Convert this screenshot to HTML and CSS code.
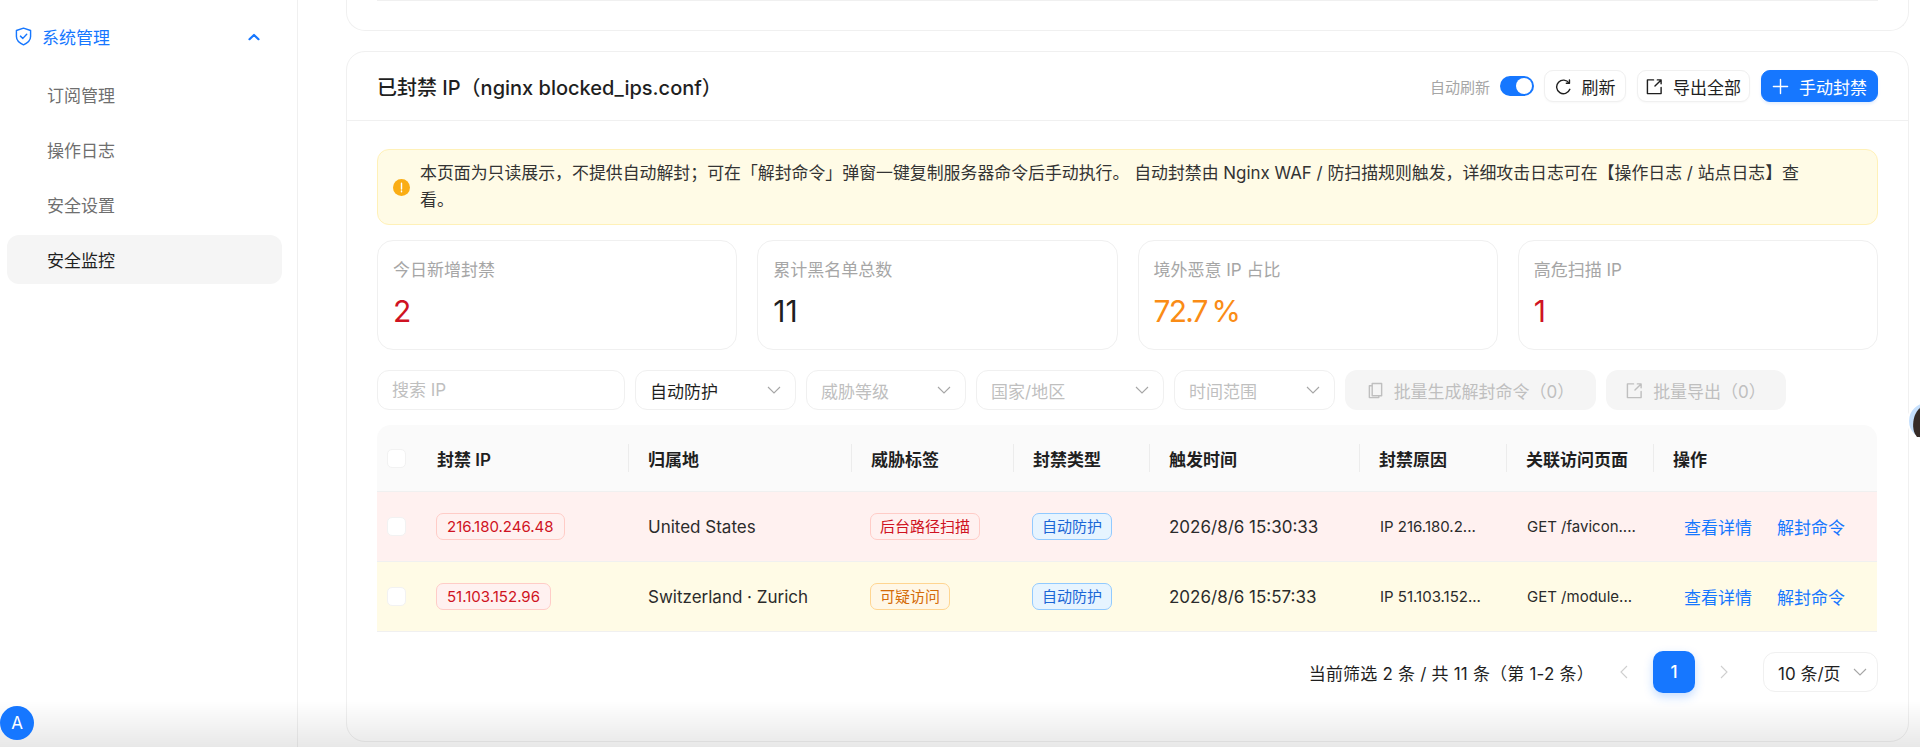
FILE: index.html
```html
<!DOCTYPE html>
<html lang="zh-CN">
<head>
    <meta charset="UTF-8">
    <meta name="viewport" content="width=device-width, initial-scale=1.0">
    <title>安全监控</title>
    <link rel="stylesheet" href="styles.css">
</head>
<body>
    <aside class="sidebar">
        <div class="menuGroup">
            <svg class="menuIcon" viewBox="0 0 18 20" fill="none" stroke="currentColor" stroke-width="1.5" stroke-linejoin="round" stroke-linecap="round">
                <path d="M9 1.2 16.5 3.6V10c0 4-3.2 6.900-7.500 8.800C4.700 16.900 1.500 14 1.500 10V3.600Z"/>
                <path d="M5.800 9.600 8.300 12 12.400 7.600"/>
            </svg>
            <span>系统管理</span>
            <svg class="menuArrow" viewBox="0 0 12 8" fill="none" stroke="currentColor" stroke-width="2.200" stroke-linecap="round" stroke-linejoin="round">
                <path d="M1.500 6.200 6 2 10.500 6.200"/>
            </svg>
        </div>
        <a class="menuItem" href="#">订阅管理</a>
        <a class="menuItem" href="#">操作日志</a>
        <a class="menuItem" href="#">安全设置</a>
        <a class="menuItem active" href="#">安全监控</a>
    </aside>

    <main class="main">
        <div class="prevCard"><div class="prevLine"></div></div>

        <section class="card">
            <header class="cardHead">
                <h2>已封禁 IP（nginx blocked_ips.conf）</h2>
                <div class="headTools">
                    <span class="autoLabel">自动刷新</span>
                    <span class="switch"><i></i></span>
                    <button class="btn">
                        <svg class="btnIcon" viewBox="0 0 18 18" fill="none" stroke="currentColor" stroke-width="1.500" stroke-linecap="round">
                            <path d="M14.900 5.400A7.200 7.200 0 1 0 15.700 12"/>
                            <path d="M15.300 2.200V5.600H12" stroke-linejoin="round"/>
                        </svg>
                        刷新
                    </button>
                    <button class="btn">
                        <svg class="btnIcon" viewBox="0 0 18 18" fill="none" stroke="currentColor" stroke-width="1.500" stroke-linecap="round" stroke-linejoin="round">
                            <path d="M8 2H1.500V16.500H16V10"/>
                            <path d="M9.500 8.500 16 2M12 2H16V6"/>
                        </svg>
                        导出全部
                    </button>
                    <button class="btn primary">
                        <svg class="btnIcon" viewBox="0 0 18 18" fill="none" stroke="currentColor" stroke-width="1.500" stroke-linecap="round">
                            <path d="M9 1.500V16.500M1.500 9H16.500"/>
                        </svg>
                        手动封禁
                    </button>
                </div>
            </header>

            <div class="cardBody">
                <div class="alert">
                    <svg class="alertIcon" viewBox="0 0 18 18">
                        <circle cx="9" cy="9" r="9" fill="#faad14"/>
                        <path d="M9 4.500V10.500M9 12.700V13.500" stroke="#fff" stroke-width="1.500" stroke-linecap="round"/>
                    </svg>
                    <p>本页面为只读展示，不提供自动解封；可在「解封命令」弹窗一键复制服务器命令后手动执行。 自动封禁由 Nginx WAF / 防扫描规则触发，详细攻击日志可在【操作日志 / 站点日志】查看。</p>
                </div>

                <div class="stats">
                    <div class="stat">
                        <div class="statLabel">今日新增封禁</div>
                        <div class="statValue red">2</div>
                    </div>
                    <div class="stat">
                        <div class="statLabel">累计黑名单总数</div>
                        <div class="statValue">11</div>
                    </div>
                    <div class="stat">
                        <div class="statLabel">境外恶意 IP 占比</div>
                        <div class="statValue orange">72.7 %</div>
                    </div>
                    <div class="stat">
                        <div class="statLabel">高危扫描 IP</div>
                        <div class="statValue red">1</div>
                    </div>
                </div>

                <div class="filters">
                    <input class="search" type="text" placeholder="搜索 IP">
                    <div class="select w161 filled">自动防护<svg class="caret" viewBox="0 0 14 8"><path d="M1 1 7 7 13 1"/></svg></div>
                    <div class="select w160">威胁等级<svg class="caret" viewBox="0 0 14 8"><path d="M1 1 7 7 13 1"/></svg></div>
                    <div class="select w188">国家/地区<svg class="caret" viewBox="0 0 14 8"><path d="M1 1 7 7 13 1"/></svg></div>
                    <div class="select w161">时间范围<svg class="caret" viewBox="0 0 14 8"><path d="M1 1 7 7 13 1"/></svg></div>
                    <button class="batchBtn w251">
                        <svg class="btnIcon" viewBox="0 0 18 18" fill="none" stroke="currentColor" stroke-width="1.500" stroke-linejoin="round">
                            <path d="M5.500 1.500H15.500V14.500H5.500Z"/>
                            <path d="M5.500 4H2.500V16.500H12.500V14.500"/>
                        </svg>
                        批量生成解封命令（0）
                    </button>
                    <button class="batchBtn w180">
                        <svg class="btnIcon" viewBox="0 0 18 18" fill="none" stroke="currentColor" stroke-width="1.500" stroke-linecap="round" stroke-linejoin="round">
                            <path d="M8 2H1.500V16.500H16V10"/>
                            <path d="M9.500 8.500 16 2M12 2H16V6"/>
                        </svg>
                        批量导出（0）
                    </button>
                </div>

                <table class="ipTable">
                    <colgroup>
                        <col class="c1"><col class="c2"><col class="c3"><col class="c4"><col class="c5"><col class="c6"><col class="c7"><col class="c8"><col class="c9">
                    </colgroup>
                    <thead>
                        <tr>
                            <th class="checkCell"><span class="check"></span></th>
                            <th>封禁 IP</th>
                            <th>归属地</th>
                            <th>威胁标签</th>
                            <th>封禁类型</th>
                            <th>触发时间</th>
                            <th>封禁原因</th>
                            <th>关联访问页面</th>
                            <th>操作</th>
                        </tr>
                    </thead>
                    <tbody>
                        <tr class="rowDanger">
                            <td class="checkCell"><span class="check"></span></td>
                            <td><span class="tag tagRed tagIp">216.180.246.48</span></td>
                            <td>United States</td>
                            <td><span class="tag tagRed">后台路径扫描</span></td>
                            <td><span class="tag tagBlue">自动防护</span></td>
                            <td>2026/8/6 15:30:33</td>
                            <td class="small">IP 216.180.2...</td>
                            <td class="small">GET /favicon....</td>
                            <td class="actions"><a href="#">查看详情</a><a href="#">解封命令</a></td>
                        </tr>
                        <tr class="rowWarn">
                            <td class="checkCell"><span class="check"></span></td>
                            <td><span class="tag tagRed tagIp">51.103.152.96</span></td>
                            <td>Switzerland · Zurich</td>
                            <td><span class="tag tagOrange">可疑访问</span></td>
                            <td><span class="tag tagBlue">自动防护</span></td>
                            <td>2026/8/6 15:57:33</td>
                            <td class="small">IP 51.103.152...</td>
                            <td class="small">GET /module...</td>
                            <td class="actions"><a href="#">查看详情</a><a href="#">解封命令</a></td>
                        </tr>
                    </tbody>
                </table>

                <div class="pager">
                    <span class="pagerText">当前筛选 2 条 / 共 11 条（第 1-2 条）</span>
                    <svg class="pagerArrow" viewBox="0 0 8 14"><path d="M7 1 1 7 7 13"/></svg>
                    <span class="pageNum">1</span>
                    <svg class="pagerArrow" viewBox="0 0 8 14"><path d="M1 1 7 7 1 13"/></svg>
                    <div class="pageSize">10 条/页<svg class="caret" viewBox="0 0 14 8"><path d="M1 1 7 7 13 1"/></svg></div>
                </div>
            </div>
        </section>
    </main>

    <div class="pageFade"></div>
    <div class="avatar">A</div>
    <svg class="floatBubble" viewBox="0 0 40 40">
        <circle cx="20" cy="20" r="19" fill="#c6e0fd" stroke="#fff" stroke-width="2"/>
        <path d="M8 33C5 27 6 19 8 14 10 9 13 6 17 5L20 5V36H10Z" fill="#362c28"/>
    </svg>
</body>
</html>
```

FILE: styles.css
```css
html, body {
    margin: 0;
    padding: 0;
    height: 100%;
    overflow: hidden;
}

body {
    display: flex;
    background: #fff;
    color: #1f1f1f;
    font-family: Inter, "Noto Sans CJK SC", sans-serif;
    font-size: 17px;
}

a {
    text-decoration: none;
}

/* sidebar */
.sidebar {
    width: 298px;
    flex: none;
    box-sizing: border-box;
    padding: 12px 15px 0 7px;
    border-right: 1px solid #f0f0f0;
    display: flex;
    flex-direction: column;
    gap: 6px;
}

.menuGroup {
    height: 49px;
    display: flex;
    align-items: center;
    padding-left: 8px;
    color: #1677ff;
    margin-bottom: 3px;
}

.menuIcon {
    width: 17px;
    height: 19px;
    margin-right: 10px;
}

.menuArrow {
    width: 12px;
    height: 8px;
    margin-left: auto;
    margin-right: 22px;
}

.menuItem {
    height: 49px;
    display: flex;
    align-items: center;
    padding-left: 40px;
    color: #6f6f6f;
    border-radius: 12px;
}

.menuItem.active {
    background: #f5f5f5;
    color: #1f1f1f;
}

/* main column */
.main {
    flex: 1;
    min-width: 0;
    padding: 0 11px 0 48px;
    display: flex;
    flex-direction: column;
    gap: 20px;
}

.prevCard {
    height: 31px;
    flex: none;
    box-sizing: border-box;
    padding: 0 30px;
    border: 1px solid #f0f0f0;
    border-top: none;
    border-radius: 0 0 19px 19px;
}

.prevLine {
    height: 1px;
    background: #f0f0f0;
}

.card {
    height: 691px;
    flex: none;
    box-sizing: border-box;
    border: 1px solid #f0f0f0;
    border-radius: 19px;
}

.cardHead {
    height: 69px;
    box-sizing: border-box;
    padding: 0 30px;
    display: flex;
    align-items: center;
    justify-content: space-between;
    border-bottom: 1px solid #f0f0f0;
}

.cardHead h2 {
    margin: 0;
    font-size: 20px;
    font-weight: 500;
}

.headTools {
    display: flex;
    align-items: center;
}

.autoLabel {
    font-size: 15px;
    color: #a6a6a6;
    margin-right: 10px;
}

.switch {
    width: 34px;
    height: 20px;
    border-radius: 10px;
    background: #1677ff;
    display: flex;
    align-items: center;
    justify-content: flex-end;
    padding-right: 2px;
    box-sizing: border-box;
    margin-right: 10px;
}

.switch i {
    width: 16px;
    height: 16px;
    border-radius: 50%;
    background: #fff;
}

.btn {
    height: 32px;
    padding: 0 8px;
    margin-left: 11px;
    display: flex;
    align-items: center;
    gap: 10px;
    font: inherit;
    color: #1f1f1f;
    background: #fff;
    border: 1px solid #f0f0f0;
    border-radius: 9px;
    box-shadow: 0 1px 2px rgba(0, 0, 0, 0.03);
}

.btn:first-of-type {
    margin-left: 0;
    padding: 0 9.5px;
}

.btn.primary {
    padding: 0 10px;
    background: #1677ff;
    border-color: #1677ff;
    color: #fff;
    box-shadow: 0 2px 3px rgba(22, 119, 255, 0.12);
}

.btnIcon {
    width: 17px;
    height: 17px;
    flex: none;
}

.cardBody {
    padding: 28px 30px 0;
    display: flex;
    flex-direction: column;
}

/* notice */
.alert {
    height: 76px;
    box-sizing: border-box;
    padding: 0 15px;
    display: flex;
    align-items: center;
    gap: 10px;
    background: #fffbe6;
    border: 1px solid #fff1b8;
    border-radius: 12px;
}

.alertIcon {
    width: 17px;
    height: 17px;
    flex: none;
}

.alert p {
    margin: 0;
    max-width: 1395px;
    font-size: 16.9px;
    line-height: 27px;
    color: #333;
}

/* numbers */
.stats {
    margin-top: 15px;
    display: grid;
    grid-template-columns: repeat(4, 1fr);
    gap: 20px;
}

.stat {
    height: 110px;
    box-sizing: border-box;
    padding: 17px 15px;
    border: 1px solid #f0f0f0;
    border-radius: 16px;
}

.statLabel {
    color: #a6a6a6;
    line-height: 25px;
}

.statValue {
    margin-top: 10px;
    font-size: 30px;
    line-height: 36px;
    color: #1f1f1f;
}

.red {
    color: #cf1322;
}

.orange {
    color: #fa8c16;
    letter-spacing: -1.8px;
    word-spacing: -2px;
}

/* filters */
.filters {
    margin-top: 20px;
    display: flex;
    gap: 10px;
}

.search, .select, .batchBtn {
    height: 40px;
    box-sizing: border-box;
    border-radius: 12px;
    font: inherit;
}

.search {
    width: 248px;
    padding: 0 14px;
    border: 1px solid #f0f0f0;
    outline: none;
}

.search::placeholder {
    color: #bfbfbf;
}

.select {
    padding: 0 14px;
    display: flex;
    align-items: center;
    justify-content: space-between;
    border: 1px solid #f0f0f0;
    color: #bfbfbf;
}

.select.filled {
    color: #1f1f1f;
}

.w161 {
    width: 161px;
}

.w160 {
    width: 160px;
}

.w188 {
    width: 188px;
}

.w251 {
    width: 251px;
}

.w180 {
    width: 180px;
}

.caret {
    width: 14px;
    height: 8px;
    fill: none;
    stroke: #a6a6a6;
    stroke-width: 1.100;
}

.batchBtn {
    display: flex;
    align-items: center;
    justify-content: center;
    gap: 10px;
    padding: 0;
    border: none;
    background: #f5f5f5;
    color: #bfbfbf;
}

/* table */
.ipTable {
    margin-top: 15px;
    width: 1500px;
    table-layout: fixed;
    border-collapse: separate;
    border-spacing: 0;
}

.c1 { width: 40px; }
.c2 { width: 211px; }
.c3 { width: 223px; }
.c4 { width: 162px; }
.c5 { width: 136px; }
.c6 { width: 210px; }
.c7 { width: 147px; }
.c8 { width: 147px; }
.c9 { width: 224px; }

.ipTable th {
    height: 67px;
    box-sizing: border-box;
    padding: 0 0 0 20px;
    background: #fafafa;
    font-weight: 600;
    text-align: left;
    position: relative;
    border-bottom: 1px solid #f0f0f0;
}

.ipTable th:first-child {
    border-radius: 14px 0 0 0;
}

.ipTable th:last-child {
    border-radius: 0 14px 0 0;
}

.ipTable th + th + th::before {
    content: "";
    position: absolute;
    left: 0;
    top: 19px;
    width: 1px;
    height: 28px;
    background: #ececec;
}

.ipTable td {
    height: 70px;
    box-sizing: border-box;
    padding: 0 0 0 20px;
    border-bottom: 1px solid #f0f0f0;
    color: #2b2b2b;
}

.ipTable .checkCell {
    padding: 0 0 0 10px;
}

.check {
    display: block;
    width: 19px;
    height: 19px;
    box-sizing: border-box;
    background: #fff;
    border: 1px solid #f2f2f2;
    border-radius: 5px;
}

.rowDanger td {
    background: #fff1f0;
}

.rowWarn td {
    background: #fffbe6;
}

.ipTable td.small {
    padding-left: 21px;
    font-size: 15px;
}

.tag {
    display: inline-block;
    box-sizing: border-box;
    height: 27px;
    line-height: 25px;
    padding: 0 9px;
    margin-left: -1px;
    font-size: 15px;
    border: 1px solid;
    border-radius: 7px;
    vertical-align: middle;
}

.tagIp {
    padding: 0 10px;
}

.tagRed {
    color: #cf1322;
    background: #fff1f0;
    border-color: #ffccc7;
}

.tagOrange {
    color: #d46b08;
    background: #fff7e6;
    border-color: #ffd591;
}

.tagBlue {
    color: #1a66d6;
    background: #e6f4ff;
    border-color: #91caff;
}

.ipTable td.actions {
    padding-left: 31px;
}

.actions a {
    color: #1677ff;
    margin-right: 25px;
}

/* pager */
.pager {
    margin-top: 19px;
    display: flex;
    align-items: center;
}

.pagerText {
    margin-left: auto;
    letter-spacing: 0.2px;
}

.pagerArrow {
    width: 8px;
    height: 14px;
    margin: 0 25px 0 26px;
    fill: none;
    stroke: #cfcfcf;
    stroke-width: 1.100;
}

.pagerArrow:last-of-type {
    margin: 0 35px 0 25px;
}

.pageNum {
    width: 42px;
    height: 42px;
    display: flex;
    align-items: center;
    justify-content: center;
    background: #1677ff;
    color: #fff;
    font-weight: 500;
    border-radius: 10px;
    box-shadow: 0 4px 10px rgba(22, 119, 255, 0.25);
}

.pageSize {
    width: 115px;
    height: 40px;
    box-sizing: border-box;
    padding: 0 10px 0 14px;
    display: flex;
    align-items: center;
    justify-content: space-between;
    border: 1px solid #f0f0f0;
    border-radius: 12px;
}

/* things that sit over the page */
.pageFade {
    position: fixed;
    left: 0;
    right: 0;
    bottom: 0;
    height: 46px;
    background: linear-gradient(to bottom, rgba(0, 0, 0, 0), rgba(0, 0, 0, 0.09));
    pointer-events: none;
}

.avatar {
    position: fixed;
    left: 0;
    top: 706px;
    width: 34px;
    height: 34px;
    display: flex;
    align-items: center;
    justify-content: center;
    border-radius: 50%;
    background: #1677ff;
    color: #fff;
}

.floatBubble {
    position: fixed;
    left: 1907px;
    top: 401px;
    width: 40px;
    height: 40px;
}
```
